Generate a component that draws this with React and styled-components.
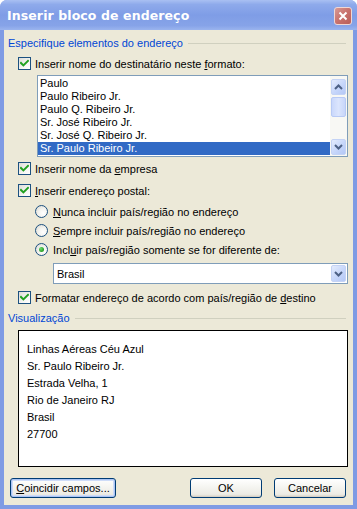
import React from 'react';
import styled, { createGlobalStyle } from 'styled-components';

const GlobalStyle = createGlobalStyle`
  html, body {
    margin: 0;
    padding: 0;
    background: #ffffff;
  }
  body {
    font-family: Tahoma, "Liberation Sans", Arial, sans-serif;
    font-size: 11px;
    color: #000;
  }
`;

const Window = styled.div`
  width: 357px;
  height: 509px;
  display: flex;
  flex-direction: column;
  box-sizing: border-box;
  border-radius: 7px 7px 0 0;
  overflow: hidden;
  background: #7f9be4;
`;

const TitleBar = styled.div`
  height: 30px;
  flex-shrink: 0;
  display: flex;
  align-items: center;
  justify-content: space-between;
  padding: 0 5px 0 7px;
  background: linear-gradient(to bottom, #a9c0f2 0%, #8eaaeb 15%, #7f9de6 50%, #86a3e8 85%, #9ab4ee 100%);
`;

const Title = styled.span`
  color: #ffffff;
  font-family: "DejaVu Sans", "Liberation Sans", sans-serif;
  font-weight: bold;
  font-size: 12.5px;
  letter-spacing: 0.1px;
  margin-top: 1px;
`;

const CloseButton = styled.div`
  width: 18px;
  height: 18px;
  margin-top: 2px;
  border-radius: 3px;
  border: 1px solid #efd7d5;
  box-sizing: border-box;
  background: linear-gradient(135deg, #d89a95 0%, #c8716c 50%, #b95e5a 100%);
  display: flex;
  align-items: center;
  justify-content: center;
`;

const Frame = styled.div`
  flex: 1;
  display: flex;
  flex-direction: column;
  margin: 0 4px 4px 4px;
  background: #ece9d8;
  padding: 6px 0 0 0;
`;

const GroupHeader = styled.div`
  height: 14px;
  display: flex;
  align-items: center;
  gap: 5px;
  padding-left: 4px;
  margin-right: 7px;
  color: #0046d5;
  white-space: nowrap;

  &::after {
    content: '';
    flex: 1;
    height: 1px;
    background: #d0d0bf;
  }
`;

const Row = styled.label`
  display: flex;
  align-items: center;
  height: 13px;
  gap: 4px;
  margin-top: ${(p) => p.$top}px;
  margin-left: ${(p) => p.$left}px;
  white-space: nowrap;
`;

const Box = styled.span`
  width: 13px;
  height: 13px;
  box-sizing: border-box;
  border: 1px solid #1c5180;
  background: linear-gradient(135deg, #dcdcd7 0%, #f5f5f3 60%, #ffffff 100%);
  display: flex;
  align-items: center;
  justify-content: center;
  flex-shrink: 0;
`;

const Radio = styled.span`
  width: 13px;
  height: 13px;
  box-sizing: border-box;
  border: 1px solid #1c5180;
  border-radius: 50%;
  background: radial-gradient(circle at 65% 65%, #ffffff 0%, #f3f3ef 45%, #d4d4cc 100%);
  display: flex;
  align-items: center;
  justify-content: center;
  flex-shrink: 0;
  margin-right: 1px;

  &::after {
    content: '';
    display: ${(p) => (p.$checked ? 'block' : 'none')};
    width: 5px;
    height: 5px;
    border-radius: 50%;
    background: radial-gradient(circle at 35% 35%, #6fde6f 0%, #2ea52e 60%, #1e801e 100%);
  }
`;

const Key = styled.u`
  text-decoration: underline;
`;

const ListBox = styled.div`
  margin: 5px 5px 0 33px;
  height: 82px;
  box-sizing: border-box;
  border: 1px solid #7f9db9;
  background: #ffffff;
  display: flex;
`;

const ListItems = styled.div`
  flex: 1;
  padding-top: 1px;
  display: flex;
  flex-direction: column;
`;

const ListItem = styled.div`
  height: 13px;
  line-height: 13px;
  padding-left: 2px;
  white-space: nowrap;
  background: ${(p) => (p.$selected ? '#316ac5' : 'transparent')};
  color: ${(p) => (p.$selected ? '#ffffff' : '#000000')};
`;

const ScrollBar = styled.div`
  width: 17px;
  display: flex;
  flex-direction: column;
  background: #f8f8f4;
  padding: 3px 0 1px 0;
  box-sizing: border-box;
`;

const ScrollButton = styled.div`
  height: 14px;
  margin: 0 1px;
  border: 1px solid #c4d3f5;
  border-radius: 2px;
  background: linear-gradient(135deg, #e4ecfd 0%, #c6d6fa 55%, #b4c8f6 100%);
  display: flex;
  align-items: center;
  justify-content: center;
`;

const ScrollThumb = styled.div`
  height: 18px;
  margin: 2px 1px 0 1px;
  border: 1px solid #b8caf5;
  border-radius: 2px;
  background: linear-gradient(to right, #cad8fb 0%, #dbe5fd 50%, #c8d6fa 100%);
`;

const ScrollTrack = styled.div`
  flex: 1;
`;

const Combo = styled.div`
  margin: 7px 5px 0 49px;
  height: 21px;
  box-sizing: border-box;
  border: 1px solid #7f9db9;
  background: #ffffff;
  display: flex;
  align-items: center;
  padding: 1px 1px 1px 3px;
`;

const ComboText = styled.span`
  flex: 1;
`;

const ComboButton = styled.div`
  width: 15px;
  height: 17px;
  border: 1px solid #c4d3f5;
  border-radius: 2px;
  box-sizing: border-box;
  background: linear-gradient(135deg, #e4ecfd 0%, #c6d6fa 55%, #b4c8f6 100%);
  display: flex;
  align-items: center;
  justify-content: center;
`;

const Preview = styled.div`
  margin: 5px 5px 0 14px;
  height: 137px;
  box-sizing: border-box;
  border: 1px solid #000000;
  background: #ffffff;
  padding: 10px 0 0 8px;
  display: flex;
  flex-direction: column;
`;

const PreviewLine = styled.div`
  height: 17px;
  line-height: 17px;
  white-space: nowrap;
`;

const ButtonRow = styled.div`
  display: flex;
  align-items: center;
  margin: 11px 7px 0 6px;
  gap: 12px;
`;

const Button = styled.button`
  height: 20px;
  width: ${(p) => p.$width}px;
  box-sizing: border-box;
  font-family: inherit;
  font-size: 11px;
  color: #000;
  border: 1px solid #003c74;
  border-radius: 3px;
  padding: 0;
  background: linear-gradient(to bottom, #ffffff 0%, #f6f6f2 40%, #ecebe4 85%, #d6d0c5 100%);
  box-shadow: ${(p) => (p.$focused ? 'inset 0 0 0 1px #aac4f4, inset 0 0 0 2px #cedcf8' : 'inset 0 -1px 0 #d6d0c5')};
`;

const Spacer = styled.div`
  flex: 1;
`;

const Check = () => (
  <svg width="9" height="9" viewBox="0 0 9 9">
    <path d="M1 4 L3.4 6.4 L8 1.8" stroke="#21a121" strokeWidth="2" fill="none" strokeLinecap="square" />
  </svg>
);

const Chevron = ({ up }) => (
  <svg width="9" height="6" viewBox="0 0 9 6">
    <path
      d={up ? 'M1 5 L4.5 1.5 L8 5' : 'M1 1 L4.5 4.5 L8 1'}
      stroke="#4d6185"
      strokeWidth="2"
      fill="none"
    />
  </svg>
);

const CheckRow = ({ top, children }) => (
  <Row $top={top} $left={14}>
    <Box>
      <Check />
    </Box>
    <span>{children}</span>
  </Row>
);

const RadioRow = ({ top, checked, children }) => (
  <Row $top={top} $left={31}>
    <Radio $checked={checked} />
    <span>{children}</span>
  </Row>
);

const names = [
  'Paulo',
  'Paulo Ribeiro Jr.',
  'Paulo Q. Ribeiro Jr.',
  'Sr. José Ribeiro Jr.',
  'Sr. José Q. Ribeiro Jr.',
  'Sr. Paulo Ribeiro Jr.',
];

const preview = [
  'Linhas Aéreas Céu Azul',
  'Sr. Paulo Ribeiro Jr.',
  'Estrada Velha, 1',
  'Rio de Janeiro RJ',
  'Brasil',
  '27700',
];

export default function App() {
  return (
    <>
      <GlobalStyle />
      <Window>
        <TitleBar>
          <Title>Inserir bloco de endereço</Title>
          <CloseButton>
            <svg width="10" height="10" viewBox="0 0 10 10">
              <path d="M1.5 1.5 L8.5 8.5 M8.5 1.5 L1.5 8.5" stroke="#ffffff" strokeWidth="2" />
            </svg>
          </CloseButton>
        </TitleBar>
        <Frame>
          <GroupHeader>Especifique elementos do endereço</GroupHeader>
          <CheckRow top={7}>
            Inserir nome do destinatário neste <Key>f</Key>ormato:
          </CheckRow>
          <ListBox>
            <ListItems>
              {names.map((n, i) => (
                <ListItem key={n} $selected={i === names.length - 1}>
                  {n}
                </ListItem>
              ))}
            </ListItems>
            <ScrollBar>
              <ScrollButton>
                <Chevron up />
              </ScrollButton>
              <ScrollThumb />
              <ScrollTrack />
              <ScrollButton>
                <Chevron />
              </ScrollButton>
            </ScrollBar>
          </ListBox>
          <CheckRow top={5}>
            Inserir nome da <Key>e</Key>mpresa
          </CheckRow>
          <CheckRow top={9}>
            <Key>I</Key>nserir endereço postal:
          </CheckRow>
          <RadioRow top={8}>
            <Key>N</Key>unca incluir país/região no endereço
          </RadioRow>
          <RadioRow top={6}>
            <Key>S</Key>empre incluir país/região no endereço
          </RadioRow>
          <RadioRow top={6} checked>
            Incl<Key>u</Key>ir país/região somente se for diferente de:
          </RadioRow>
          <Combo>
            <ComboText>Brasil</ComboText>
            <ComboButton>
              <Chevron />
            </ComboButton>
          </Combo>
          <CheckRow top={7}>
            Formatar endereço de acordo com país/região de <Key>d</Key>estino
          </CheckRow>
          <GroupHeader style={{ marginTop: 7 }}>Visualização</GroupHeader>
          <Preview>
            {preview.map((l) => (
              <PreviewLine key={l}>{l}</PreviewLine>
            ))}
          </Preview>
          <ButtonRow>
            <Button $width={106} $focused>
              <Key>C</Key>oincidir campos...
            </Button>
            <Spacer />
            <Button $width={72}>OK</Button>
            <Button $width={72}>Cancelar</Button>
          </ButtonRow>
        </Frame>
      </Window>
    </>
  );
}
